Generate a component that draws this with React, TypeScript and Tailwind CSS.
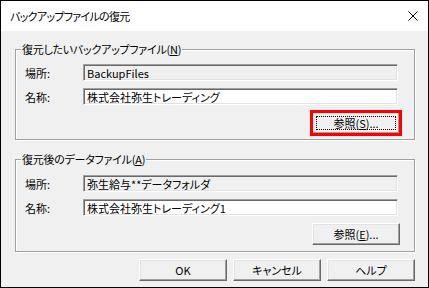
import React from 'react';

const font = "font-['Noto_Sans_CJK_JP','Noto_Sans',sans-serif] [font-feature-settings:'palt']";

function TextBox({ value, readOnly }: { value: string; readOnly?: boolean }) {
  return (
    <div
      className={`h-[17px] w-[315px] flex items-center pl-[3px] border border-t-[#a0a0a0] border-l-[#a0a0a0] border-b-white border-r-white shadow-[inset_1px_1px_0_#696969,inset_-1px_-1px_0_#e3e3e3] text-[11px] leading-[14px] text-black whitespace-nowrap overflow-hidden ${
        readOnly ? 'bg-[#f0f0f0]' : 'bg-white'
      }`}
    >
      {value}
    </div>
  );
}

function Button({ children, focused }: { children: React.ReactNode; focused?: boolean }) {
  return (
    <button
      className={`relative h-[22px] w-[88px] bg-[#f0f0f0] border border-t-white border-l-white border-b-[#696969] border-r-[#696969] shadow-[inset_-1px_-1px_0_#a0a0a0,inset_1px_1px_0_#e3e3e3] text-[11px] leading-[14px] text-black flex items-center justify-center ${
        focused ? 'outline-[3px] outline outline-[#ff0000] outline-offset-[-1px]' : ''
      }`}
    >
      {focused && <span className="absolute inset-[3px] border border-dotted border-black" />}
      <span className="relative">{children}</span>
    </button>
  );
}

function Row({ label, value, readOnly }: { label: string; value: string; readOnly?: boolean }) {
  return (
    <div className="flex items-center">
      <span className="w-[58px] text-[11px] leading-[14px] text-black">{label}</span>
      <TextBox value={value} readOnly={readOnly} />
    </div>
  );
}

function Group({
  title,
  mnemonic,
  children,
  className,
}: {
  title: string;
  mnemonic: string;
  children: React.ReactNode;
  className: string;
}) {
  return (
    <div
      className={`relative border border-[#a0a0a0] shadow-[1px_1px_0_#fff,inset_1px_1px_0_#fff] pl-[9px] pr-[15px] flex flex-col gap-[7px] ${className}`}
    >
      <span className="absolute left-[5px] -top-[8px] bg-[#f0f0f0] px-[1px] text-[11px] leading-[14px] tracking-[-0.25px] text-black whitespace-nowrap">
        {title}(<u>{mnemonic}</u>)
      </span>
      {children}
    </div>
  );
}

export default function App() {
  return (
    <div className={`w-[429px] h-[288px] border border-black bg-[#f0f0f0] flex flex-col ${font}`}>
      {/* title bar */}
      <div className="h-[30px] bg-white flex items-center justify-between pl-[9px] pr-[10px]">
        <span className="text-[11px] leading-[16px] tracking-[-0.7px] text-black">バックアップファイルの復元</span>
        <svg width="10" height="10" viewBox="0 0 10 10" className="text-black">
          <path d="M0.5 0.5 L9.5 9.5 M9.5 0.5 L0.5 9.5" stroke="currentColor" strokeWidth="1" fill="none" />
        </svg>
      </div>

      <div className="flex-1 flex flex-col pl-[14px] pr-[13px] pt-[18px]">
        <Group title="復元したいバックアップファイル" mnemonic="N" className="pt-[14px] pb-[5px]">
          <Row label="場所:" value="BackupFiles" readOnly />
          <Row label="名称:" value="株式会社弥生トレーディング" />
          <div className="self-end -mr-[1px]">
            <Button focused>
              参照(<u>S</u>)...
            </Button>
          </div>
        </Group>

        <Group title="復元後のデータファイル" mnemonic="A" className="mt-[19px] pt-[15px] pb-[6px]">
          <Row label="場所:" value="弥生給与**データフォルダ" readOnly />
          <Row label="名称:" value="株式会社弥生トレーディング1" />
          <div className="self-end -mr-[1px]">
            <Button>
              参照(<u>E</u>)...
            </Button>
          </div>
        </Group>

        <div className="mt-[7px] flex justify-end gap-[6px]">
          <Button>OK</Button>
          <Button>キャンセル</Button>
          <Button>ヘルプ</Button>
        </div>
      </div>
    </div>
  );
}
